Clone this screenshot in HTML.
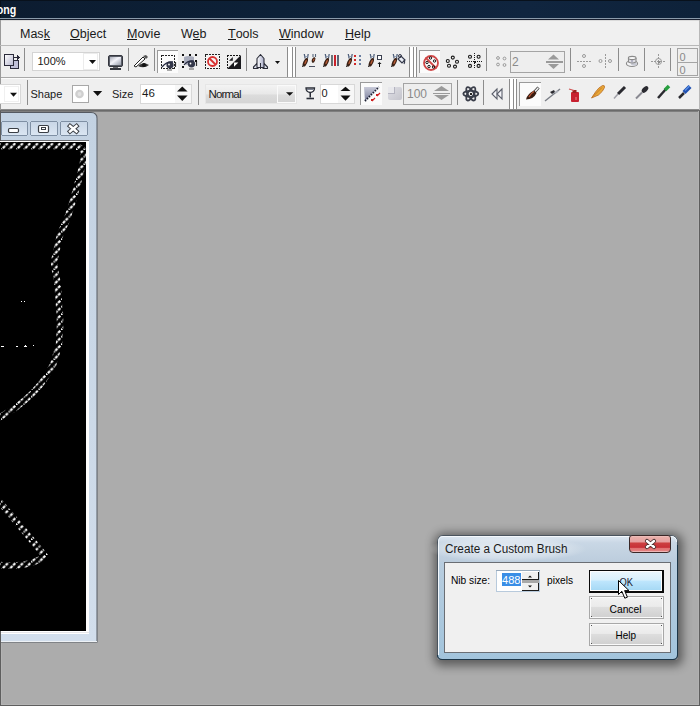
<!DOCTYPE html>
<html><head><meta charset="utf-8">
<style>
*{margin:0;padding:0;box-sizing:border-box}
html,body{width:700px;height:706px;overflow:hidden;background:#acacac;font-family:"Liberation Sans",sans-serif;position:relative}
.a{position:absolute}
#title{left:0;top:0;width:700px;height:18px;background:linear-gradient(90deg,#0c1c30 0%,#0d2138 40%,#10253f 75%,#0e223a 100%)}
#title span{position:absolute;left:-3px;top:2px;color:#fff;font-weight:bold;font-size:12.5px}
#menu{left:0;top:18px;width:700px;height:28px;background:#f0f0f0}
.mi{position:absolute;top:9px;font-size:12.5px;color:#1a1a1a}
.mi u{text-decoration:none;position:relative}.mi u::after{content:"";position:absolute;left:0;right:0;top:12px;height:1px;background:#1a1a1a}
#tb1{left:0;top:46px;width:700px;height:31px;background:#efefef}
#tb2{left:0;top:77px;width:700px;height:33px;background:#efefef}
.sep{position:absolute;width:1px;background:#a8a8a8;border-right:1px solid #fff;width:2px}
.txt{position:absolute;font-size:11px;color:#1a1a1a}
</style></head><body>
<div id="title" class="a"><svg width="700" height="18" style="position:absolute;left:0;top:0"><rect x="0" y="0" width="700" height="1" fill="#08111c"/><rect x="0" y="0" width="1" height="18" fill="#08111c"/><text x="-3.3" y="14" font-family="Liberation Sans" font-weight="bold" font-size="13" fill="#fff" textLength="19.5" lengthAdjust="spacingAndGlyphs">ong</text></svg></div>
<div id="menu" class="a">
  <div class="a" style="left:0;top:0;width:700px;height:1px;background:#8a9aaa"></div>
  <div class="a" style="left:0;top:1px;width:700px;height:1px;background:#1a2030"></div>
  <div class="a" style="left:0;top:2px;width:700px;height:1px;background:#dadada"></div>
  <div class="a" style="left:0;top:2px;width:1px;height:26px;background:#9a9a9a"></div>
  <div class="a" style="left:0;top:27px;width:700px;height:1px;background:#b8b8b8"></div>
  <div class="mi" style="left:20px">Mas<u>k</u></div>
  <div class="mi" style="left:70px"><u>O</u>bject</div>
  <div class="mi" style="left:127px"><u>M</u>ovie</div>
  <div class="mi" style="left:181px">W<u>e</u>b</div>
  <div class="mi" style="left:228px"><u>T</u>ools</div>
  <div class="mi" style="left:279px"><u>W</u>indow</div>
  <div class="mi" style="left:345px"><u>H</u>elp</div>
</div>
<svg class="a" style="left:0;top:0" width="700" height="112" viewBox="0 0 700 112" shape-rendering="crispEdges">
<defs>
<linearGradient id="gdoc" x1="0" y1="0" x2="1" y2="1"><stop offset="0" stop-color="#ffffff"/><stop offset="1" stop-color="#b8b8d0"/></linearGradient>
<linearGradient id="gnorm" x1="0" y1="0" x2="0" y2="1"><stop offset="0" stop-color="#f4f4f4"/><stop offset="0.5" stop-color="#e8e8e8"/><stop offset="0.55" stop-color="#dcdcdc"/><stop offset="1" stop-color="#d4d4d4"/></linearGradient>
<linearGradient id="gmon" x1="0" y1="0" x2="1" y2="1"><stop offset="0" stop-color="#a8acb8"/><stop offset="0.45" stop-color="#f4f4fa"/><stop offset="0.6" stop-color="#d8dae4"/><stop offset="1" stop-color="#9a9eaa"/></linearGradient>
<pattern id="dith" width="2" height="2" patternUnits="userSpaceOnUse"><rect width="2" height="2" fill="#f8f8f8"/><rect width="1" height="1" fill="#ffffff"/><rect x="1" y="1" width="1" height="1" fill="#ffffff"/></pattern>
</defs>
<!-- toolbar1 bg -->
<rect x="0" y="46" width="700" height="31" fill="#efefef"/>
<rect x="0" y="77" width="700" height="1" fill="#a8a8a8"/>
<rect x="0" y="78" width="700" height="1" fill="#fbfbfb"/>
<rect x="0" y="79" width="700" height="30" fill="#efefef"/>
<rect x="0" y="109" width="700" height="1" fill="#8a8a8a"/>
<rect x="0" y="110" width="700" height="1" fill="#6a6a6a"/><rect x="0" y="111" width="700" height="1" fill="#7e7e7e"/>
<rect x="0" y="46" width="1" height="64" fill="#9a9a9a"/>

<!-- separators tb1 -->
<g fill="#8c8c8c">
<rect x="24" y="48" width="1" height="23"/>
<rect x="128" y="48" width="1" height="23"/>
<rect x="154" y="48" width="1" height="23"/>
<rect x="246" y="48" width="1" height="23"/>
<rect x="287" y="47" width="1" height="30"/><rect x="292" y="47" width="1" height="30"/><rect x="295" y="47" width="1" height="30"/>
<rect x="409" y="47" width="1" height="30"/><rect x="413" y="47" width="1" height="30"/><rect x="416" y="47" width="1" height="30"/>
<rect x="486" y="48" width="1" height="23"/>
<rect x="570" y="48" width="1" height="23"/>
<rect x="618" y="48" width="1" height="23"/>
<rect x="644" y="48" width="1" height="23"/>
<rect x="670" y="48" width="1" height="23"/>
</g>
<g fill="#ffffff">
<rect x="288" y="47" width="4" height="30"/><rect x="293" y="47" width="2" height="30"/>
<rect x="410" y="47" width="3" height="30"/><rect x="414" y="47" width="2" height="30"/>
</g>
<!-- icon 1 : doc export -->
<rect x="10.5" y="60.5" width="8" height="8" fill="#c0c0d8" stroke="#2a2a3a"/>
<rect x="4.5" y="54.5" width="9" height="11" fill="url(#gdoc)" stroke="#2a2a3a"/>
<path d="M14 57h5" stroke="#2a2a3a" stroke-width="1"/><path d="M17 55l3 2.5l-3 2.5z" fill="#2a2a3a"/>
<!-- zoom combo -->
<rect x="32.5" y="52.5" width="67" height="18" fill="#ffffff" stroke="#d4d4d4"/>
<rect x="83.5" y="53.5" width="14" height="16" fill="#ffffff" stroke="#ececec"/>
<text x="37.5" y="65" font-family="Liberation Sans" font-size="11" fill="#1a1a1a">100%</text>
<path d="M89 60h7l-3.5 4z" fill="#111" shape-rendering="geometricPrecision"/>
<!-- monitor -->
<rect x="108.5" y="55.5" width="14" height="11" rx="1.5" fill="#5a5e68" stroke="#34363e" stroke-width="1" shape-rendering="geometricPrecision"/>
<rect x="110" y="57" width="11" height="8" fill="url(#gmon)"/>
<rect x="113" y="67" width="5" height="1" fill="#6a6a70"/><rect x="110" y="68" width="11" height="2" fill="#34363e"/>
<!-- pen eye -->
<g shape-rendering="geometricPrecision">
<path d="M134 66l9-9l2 2l-9 8z" fill="#ffffff" stroke="#222" stroke-width="1"/>
<path d="M143 56l3-1l2 2l-2 2z" fill="#555"/>
<path d="M138 66q5-5 11-1q-5 4-11 1z" fill="#333"/>
<circle cx="144" cy="65" r="2" fill="#111"/>
</g>
<!-- pressed btn 1 -->
<rect x="157" y="50" width="21" height="23" fill="#fbfbfb"/>
<rect x="157" y="50" width="21" height="1" fill="#9a9a9a"/><rect x="157" y="50" width="1" height="23" fill="#9a9a9a"/>
<rect x="161" y="55" width="13" height="13" fill="none" stroke="#222" stroke-dasharray="2 1" transform="translate(0.5 0.5)"/>
<g shape-rendering="geometricPrecision">
<ellipse cx="170" cy="65" rx="3.6" ry="3.4" fill="#34384a"/><circle cx="169" cy="64.5" r="0.9" fill="#fff"/>
<path d="M162 67q5-6 11-5" stroke="#262a40" stroke-width="1.3" fill="none"/>
<path d="M175.5 62v5" stroke="#333" stroke-width="1.2"/>
<path d="M167 70h5" stroke="#333" stroke-width="0.8"/>
</g>
<!-- gray eye icon -->
<g shape-rendering="geometricPrecision"><path d="M184 57q5-2 10 0v4q-4 1-6 4q-3 0-4-2z" fill="#a8acbc"/>
<ellipse cx="191.5" cy="64" rx="3.6" ry="3.4" fill="#34384a"/><circle cx="190.5" cy="63.5" r="0.9" fill="#fff"/>
<path d="M184 65q4-5 10-4" stroke="#262a40" stroke-width="1.2" fill="none"/>
<path d="M196.5 61v5" stroke="#333" stroke-width="1.2"/>
<path d="M189 69h5" stroke="#333" stroke-width="0.8"/></g>
<g fill="#111"><rect x="182" y="54" width="2" height="2"/><rect x="188.5" y="54" width="2" height="2"/><rect x="194.5" y="54" width="2" height="2"/><rect x="182" y="60.5" width="2" height="2"/><rect x="182" y="66" width="2" height="2"/><rect x="194.5" y="60" width="2" height="2"/></g>
<!-- no icon -->
<rect x="205.5" y="54.5" width="14" height="14" fill="#f4f4f4" stroke="#222" stroke-dasharray="2 1"/>
<g shape-rendering="geometricPrecision"><circle cx="212.5" cy="61.5" r="4.5" fill="none" stroke="#d83030" stroke-width="1.8"/><path d="M209.5 58.5l6 6" stroke="#d83030" stroke-width="1.8"/></g>
<!-- invert sel -->
<rect x="227.5" y="55.5" width="13" height="13" fill="none" stroke="#111" stroke-width="1.2" stroke-dasharray="1.6 1.2"/>
<g shape-rendering="geometricPrecision"><path d="M227 69L241 55V69Z" fill="#1a1a1e"/><path d="M229 60.8L232.8 57V60.8Z" fill="#1a1a1e"/><path d="M234 62.5H238.3L234 66.8Z" fill="#fff"/></g>
<!-- rocket -->
<defs><linearGradient id="grk" x1="0" y1="0" x2="1" y2="0"><stop offset="0" stop-color="#ffffff"/><stop offset="1" stop-color="#a8acc8"/></linearGradient></defs>
<g shape-rendering="geometricPrecision">
<path d="M257.5 63L253.5 67V68.5H258ZM263.5 63L267.5 67V68.5H263Z" fill="#d8dce8" stroke="#2a2c38" stroke-width="1.1" stroke-linejoin="round"/>
<path d="M260.5 54.5L264 58.5V67.5H257V58.5Z" fill="url(#grk)" stroke="#2a2c38" stroke-width="1.1" stroke-linejoin="round"/>
<path d="M260.5 63V69" stroke="#2a2c38" stroke-width="1"/>
</g>
<path d="M275 61h5l-2.5 3z" fill="#111" shape-rendering="geometricPrecision"/>

<defs>
<g id="brush" shape-rendering="geometricPrecision">
<path d="M2.3 0l0.8 4.5M6.2 0l-0.8 4.5" stroke="#50607a" stroke-width="1.3"/>
<path d="M2.5 2.5h3.5" stroke="#8090a8" stroke-width="0.8"/>
<ellipse cx="3.3" cy="8.3" rx="2" ry="4.6" transform="rotate(24 3.3 8.3)" fill="#3a2014"/>
<ellipse cx="3.6" cy="8" rx="0.8" ry="2.4" transform="rotate(24 3.6 8)" fill="#b85a34"/>
<path d="M0.3 13l1.2-2" stroke="#2a2a2a" stroke-width="1"/>
</g>
</defs>
<use href="#brush" x="302" y="54"/>
<g shape-rendering="geometricPrecision"><path d="M313 54v3M315.5 54v3" stroke="#56667c" stroke-width="1.1"/><ellipse cx="313.5" cy="60" rx="1.6" ry="3" transform="rotate(24 313.5 60)" fill="#3a2014"/><ellipse cx="313.7" cy="59.8" rx="0.6" ry="1.5" transform="rotate(24 313.7 59.8)" fill="#b85a34"/></g>
<rect x="309" y="66" width="6" height="1" fill="#4a5060"/>
<use href="#brush" x="323" y="54"/>
<rect x="331" y="55" width="2" height="11" fill="#6a7478"/><rect x="334" y="55" width="2" height="11" fill="#c8202a"/><rect x="337" y="55" width="2" height="11" fill="#5a6474"/>
<use href="#brush" x="346" y="54"/>
<g fill="#d02828"><rect x="354" y="54.5" width="2" height="2"/><rect x="354" y="58.5" width="2" height="2"/><rect x="354" y="62.5" width="2" height="2"/></g>
<g fill="#6a7ea0"><rect x="358.5" y="54.5" width="2" height="2"/><rect x="358.5" y="58.5" width="2" height="2"/><rect x="358.5" y="62.5" width="2" height="2"/></g>
<use href="#brush" x="368" y="54"/>
<rect x="377.5" y="55.5" width="4" height="4" fill="#fff" stroke="#3a4050"/>
<path d="M379.5 67v-4" stroke="#111" stroke-width="1"/><path d="M377.5 64l2-2l2 2z" fill="#111" shape-rendering="geometricPrecision"/>
<use href="#brush" x="391" y="54"/>
<g shape-rendering="geometricPrecision"><path d="M398 59l3-3l4 4l-3 3z" fill="#e8ecf4" stroke="#34384a" stroke-width="1.2"/><circle cx="400" cy="56" r="1.5" fill="none" stroke="#34384a" stroke-width="1"/><path d="M404 60q1.5 2 0 4" stroke="#34384a" stroke-width="1.2" fill="none"/></g>
<!-- pressed btn 2 -->
<rect x="419" y="50" width="21" height="23" fill="#fbfbfb"/>
<rect x="419" y="50" width="21" height="1" fill="#9a9a9a"/><rect x="419" y="50" width="1" height="23" fill="#9a9a9a"/>
<g shape-rendering="geometricPrecision">
<circle cx="431" cy="63" r="7" fill="none" stroke="#d04848" stroke-width="1.8"/>
<path d="M425.5 57.5l11 11" stroke="#d04848" stroke-width="1.8"/>
<g fill="none" stroke="#1a1a1a" stroke-width="1"><circle cx="430.5" cy="58" r="1.2"/><circle cx="434.5" cy="61" r="1.2"/><circle cx="427" cy="62.5" r="1.2"/><circle cx="429" cy="66.5" r="1.2"/><circle cx="433.5" cy="67" r="1.2"/></g>
<g fill="none" stroke="#1a1a1a" stroke-width="1.1"><circle cx="452.8" cy="57.6" r="1.5"/><circle cx="447.8" cy="61" r="1.5"/><circle cx="457" cy="61.8" r="1.5"/><circle cx="449" cy="65.8" r="1.5"/><circle cx="455" cy="66.6" r="1.5"/></g>
<g fill="none" stroke="#1a1a1a" stroke-width="1.1"><circle cx="470" cy="56.8" r="1.5"/><circle cx="478.6" cy="56.8" r="1.5"/><circle cx="470" cy="65.9" r="1.5"/><circle cx="478.6" cy="65.9" r="1.5"/></g>
</g>
<path d="M474.5 53v16" stroke="#1a1a1a" stroke-dasharray="1 1"/><path d="M467 61.5h15" stroke="#1a1a1a" stroke-dasharray="1 1"/><rect x="473.5" y="60.5" width="2" height="2" fill="#1a1a1a"/>
<!-- gray circles -->
<g fill="none" stroke="#9a9a9a" stroke-width="1" shape-rendering="geometricPrecision"><circle cx="498" cy="58" r="1.4"/><circle cx="504.5" cy="58.5" r="1.4"/><circle cx="498" cy="64.5" r="1.4"/><circle cx="504.5" cy="65" r="1.4"/></g>
<!-- spinner 2 -->
<rect x="510.5" y="51.5" width="54" height="21" fill="#eeeeee" stroke="#a4a4a4"/>
<text x="512" y="65.5" font-family="Liberation Sans" font-size="12" fill="#8a8a8a">2</text>
<g fill="#9a9a9a" shape-rendering="geometricPrecision"><path d="M548 59.5l5.5-5l5.5 5z"/><path d="M548 64l5.5 5l5.5-5z"/></g>
<rect x="546" y="61" width="17" height="2" fill="#9a9a9a"/>
<!-- dashed line icons -->
<g fill="none" stroke="#9a9a9a" stroke-width="1" shape-rendering="geometricPrecision"><circle cx="584" cy="56" r="1.5"/><circle cx="584" cy="66" r="1.5"/><circle cx="600.5" cy="61" r="1.5"/><circle cx="610" cy="61" r="1.5"/></g>
<path d="M577 61h14" stroke="#9a9a9a" stroke-dasharray="2 1"/>
<path d="M605.5 54v14" stroke="#9a9a9a" stroke-dasharray="2 1"/>
<!-- hat -->
<g shape-rendering="geometricPrecision"><ellipse cx="632" cy="63.5" rx="5.6" ry="3" fill="#f4f4f6" stroke="#8a8a8a" stroke-width="1.1"/><ellipse cx="634" cy="64" rx="3" ry="1.6" fill="#c8cad4"/><path d="M628.5 58v4q3.5 2 7.5 0v-4" fill="#e0e0e6" stroke="#8a8a8a" stroke-width="1.1"/><ellipse cx="632.2" cy="58" rx="3.8" ry="1.6" fill="#f8f8f8" stroke="#8a8a8a" stroke-width="1.1"/><path d="M632 60v2.5" stroke="#9a9ab0" stroke-width="1.3"/></g>
<!-- crosshair -->
<g shape-rendering="geometricPrecision"><circle cx="658.5" cy="61.5" r="3" fill="none" stroke="#9a9a9a"/></g>
<path d="M658.5 54v15M651 61.5h15" stroke="#9a9a9a" stroke-dasharray="1.5 1.5"/>
<rect x="657.5" y="60.5" width="2" height="2" fill="#8a8a8a"/>
<!-- boxes -->
<rect x="677.5" y="48.5" width="20" height="14" fill="#eeeeee" stroke="#a4a4a4"/>
<rect x="677.5" y="62.5" width="20" height="13" fill="#eeeeee" stroke="#a4a4a4"/>
<rect x="699" y="20" width="1" height="90" fill="#b8b8b8"/>
<text x="679.5" y="61" font-family="Liberation Sans" font-size="11" fill="#8a8a8a">0</text>
<text x="679.5" y="74" font-family="Liberation Sans" font-size="11" fill="#8a8a8a">0</text>
<!-- ===== toolbar 2 ===== -->
<g fill="#8c8c8c">
<rect x="27" y="80" width="1" height="25"/>
<rect x="198" y="80" width="1" height="25"/>
<rect x="457" y="80" width="1" height="25"/>
<rect x="483" y="80" width="1" height="25"/>
<rect x="509" y="79" width="1" height="30"/><rect x="513" y="79" width="1" height="30"/><rect x="516" y="79" width="1" height="30"/>
</g>
<g fill="#ffffff"><rect x="510" y="79" width="3" height="30"/><rect x="514" y="79" width="2" height="30"/></g>
<rect x="-1.5" y="84.5" width="22" height="19" fill="#ffffff" stroke="#d8d8d8"/>
<rect x="4.5" y="86.5" width="14" height="15" fill="#ffffff" stroke="#f0f0f0"/>
<path d="M10 92.7h7l-3.5 4z" fill="#111" shape-rendering="geometricPrecision"/>
<text x="30.5" y="98" font-family="Liberation Sans" font-size="11" fill="#1a1a1a">Shape</text>
<rect x="72.5" y="85.5" width="16" height="17" fill="#ffffff" stroke="#a8a8a8"/>
<circle cx="79.5" cy="94" r="4.3" fill="#cfcfcf" shape-rendering="geometricPrecision"/>
<circle cx="79.5" cy="94" r="2" fill="#e2e2e2" shape-rendering="geometricPrecision"/>
<path d="M93 91h9.2l-4.6 5z" fill="#111" shape-rendering="geometricPrecision"/>
<text x="112" y="98" font-family="Liberation Sans" font-size="11" fill="#1a1a1a">Size</text>
<rect x="140.5" y="84.5" width="51" height="19" fill="#ffffff" stroke="#d8d8d8"/>
<rect x="175" y="85" width="16" height="18" fill="#f7f7f7"/>
<text x="142" y="97" font-family="Liberation Sans" font-size="11.5" fill="#1a1a1a">46</text>
<g fill="#111" shape-rendering="geometricPrecision"><path d="M177 91.6l5.3-5.2l5.3 5.2z"/><path d="M177 95.6l5.3 5.4l5.3-5.4z"/></g>
<rect x="205.5" y="84.5" width="91" height="19" fill="url(#gnorm)" stroke="#e6e6e6"/>
<rect x="277.5" y="85.5" width="18" height="17" fill="url(#gnorm)" stroke="#fafafa"/>
<text x="208.5" y="97.6" font-family="Liberation Sans" font-size="11.5" fill="#1a1a1a" textLength="33">Normal</text>
<path d="M286 92.2h7.3l-3.65 3.6z" fill="#111" shape-rendering="geometricPrecision"/>
<!-- goblet -->
<g shape-rendering="geometricPrecision">
<path d="M306 88h8.5q0 4-4.25 4.5q-4.25-0.5-4.25-4.5z" fill="#ffffff" stroke="#2a2e38" stroke-width="1.3"/>
<path d="M307 89.5h6.5" stroke="#7a8090" stroke-width="1"/>
<path d="M310.25 92.5v5" stroke="#2a2e38" stroke-width="1.5"/>
<path d="M306.5 98.5h7.5" stroke="#2a2e38" stroke-width="1.6"/>
</g>
<rect x="320.5" y="84.5" width="34" height="19" fill="#ffffff" stroke="#d8d8d8"/>
<rect x="338" y="85" width="16" height="18" fill="#f7f7f7"/>
<text x="321.5" y="96.5" font-family="Liberation Sans" font-size="11" fill="#1a1a1a">0</text>
<g fill="#111" shape-rendering="geometricPrecision"><path d="M340.5 91.1l5-4.4l5 4.4z"/><path d="M340.5 95.6l5 5.2l5-5.2z"/></g>
<!-- pressed btn 3 -->
<rect x="360" y="82" width="22" height="23" fill="#fbfbfb"/>
<rect x="360" y="82" width="22" height="1" fill="#9a9a9a"/><rect x="360" y="82" width="1" height="23" fill="#9a9a9a"/>
<defs><linearGradient id="gtri" x1="0" y1="0" x2="0" y2="1"><stop offset="0" stop-color="#c8cad8"/><stop offset="1" stop-color="#7a7e9c"/></linearGradient>
<linearGradient id="gsq" x1="0" y1="0" x2="1" y2="1"><stop offset="0" stop-color="#e0e0e6"/><stop offset="1" stop-color="#c4c4cc"/></linearGradient></defs>
<path d="M364 87h15l-14 14z" fill="url(#gtri)" shape-rendering="geometricPrecision"/>
<path d="M365 101l14-14" stroke="#1a1e30" stroke-width="2" stroke-dasharray="1.4 1.4" shape-rendering="geometricPrecision"/>
<g stroke="#d02020" stroke-width="1.2" shape-rendering="geometricPrecision"><path d="M372 101l3-3M377 96l3-3"/></g>
<g fill="#d02020"><rect x="371" y="99" width="2" height="2"/><rect x="376" y="94" width="2" height="2"/></g>
<!-- gray square icon -->
<rect x="388" y="87" width="14" height="13" rx="2" fill="url(#gsq)" shape-rendering="geometricPrecision"/>
<path d="M388 87h6v6h-6z" fill="#e8e8ec"/>
<path d="M394.5 87v6.5h-6.5" stroke="#b4b4c0" fill="none" stroke-width="1"/>
<!-- disabled spinner -->
<rect x="403.5" y="83.5" width="48" height="21" fill="#eeeeee" stroke="#a4a4a4"/>
<text x="407" y="97.5" font-family="Liberation Sans" font-size="12" fill="#8a8a8a">100</text>
<g fill="#9a9a9a" shape-rendering="geometricPrecision"><path d="M434 91l7.5-5l7.5 5z"/><path d="M434 95l7.5 5l7.5-5z"/></g>
<rect x="433" y="92.5" width="17" height="1.5" fill="#9a9a9a"/>
<!-- atom -->
<g fill="none" stroke="#3a3e4a" stroke-width="1.8" shape-rendering="geometricPrecision">
<ellipse cx="470.8" cy="93.8" rx="7.5" ry="3" />
<ellipse cx="470.8" cy="93.8" rx="7.5" ry="3" transform="rotate(60 470.8 93.8)"/>
<ellipse cx="470.8" cy="93.8" rx="7.5" ry="3" transform="rotate(-60 470.8 93.8)"/>
</g>
<circle cx="470.8" cy="93.8" r="1.3" fill="#222"/>
<!-- rewind -->
<g fill="#f4f4f8" stroke="#5a5e6a" stroke-width="1.1" shape-rendering="geometricPrecision">
<path d="M497 89l-5 5l5 5z"/><path d="M502 89l-5 5l5 5z"/>
</g>
<!-- pressed btn 4 -->
<rect x="519" y="82" width="22" height="24" fill="#fbfbfb"/>
<rect x="519" y="82" width="22" height="1" fill="#9a9a9a"/><rect x="519" y="82" width="1" height="24" fill="#9a9a9a"/>
<g shape-rendering="geometricPrecision">
<path d="M534.5 92l4-4.5" stroke="#3a3a3a" stroke-width="3"/><path d="M535 91.5l3.3-3.8" stroke="#f4f4f4" stroke-width="1.4"/>
<path d="M526 99.5q1.5-6 8-9l2.5 2.5q-3 6.5-10.5 6.5z" fill="#3a1c10"/>
<path d="M529 97q2-4 5-5.5" stroke="#c05a38" stroke-width="1.3" fill="none"/>
<!-- airbrush -->
<path d="M545 101l15-12" stroke="#7a7e86" stroke-width="1.5"/>
<path d="M550 92l4-2l1 2l-3 2z" fill="#2a2a30"/>
<path d="M555 93l3-2" stroke="#b0b4bc" stroke-width="2"/>
<!-- extinguisher -->
<rect x="571" y="92" width="8" height="10" rx="1" fill="#c82030"/>
<rect x="572.5" y="90" width="4" height="3" fill="#9a2020"/>
<path d="M569 89l5 1.5" stroke="#d05050" stroke-width="1.2"/>
<path d="M576 97v3" stroke="#f0a0a0" stroke-width="0.8"/>
<!-- calligraphy -->
<path d="M591.5 98l4-6q3-4.5 7-6.5q2.5-0.5 2 2q-1.5 4-6 7.5z" fill="#e8a838" stroke="#b86a20" stroke-width="0.8"/>
<path d="M593 96.5l9-9" stroke="#c07020" stroke-width="0.8"/>
<!-- pencil -->
<path d="M618 94l7-7" stroke="#2a2a30" stroke-width="3"/>
<path d="M614 98.5l4-4.5" stroke="#a0a0a8" stroke-width="1.5"/>
<!-- pen -->
<ellipse cx="645" cy="89.5" rx="2.3" ry="4" transform="rotate(45 645 89.5)" fill="#2a2a30"/>
<path d="M636 98.5l6-6" stroke="#8a8a92" stroke-width="2"/>
<!-- green marker -->
<path d="M658 98l8-9" stroke="#2a2a30" stroke-width="2.5"/>
<path d="M665 90l4-4" stroke="#28a040" stroke-width="3.5"/>
<!-- blue marker -->
<path d="M684 92.5l6-6" stroke="#2050b0" stroke-width="4.2"/><path d="M685 90.5l4.5-4.5" stroke="#5a90e8" stroke-width="1.3"/>
<path d="M679 98l5-5" stroke="#2a2a30" stroke-width="2.5"/>
</g>
</svg>
<!-- ===== document window ===== -->
<svg class="a" style="left:0;top:111px" width="110" height="540" viewBox="0 111 110 540" shape-rendering="crispEdges">
<defs>
<linearGradient id="gfr" x1="0" y1="0" x2="0" y2="1"><stop offset="0" stop-color="#c3d2e2"/><stop offset="1" stop-color="#d2deec"/></linearGradient>
<linearGradient id="gbtn" x1="0" y1="0" x2="0" y2="1"><stop offset="0" stop-color="#c8d6e6"/><stop offset="1" stop-color="#dbe6f2"/></linearGradient>
<pattern id="ants" width="7.5" height="7.5" patternUnits="userSpaceOnUse" patternTransform="translate(1 0)">
<path d="M-1 8.5L8.5 -1" stroke="#fff" stroke-width="2.2" stroke-dasharray="3 1" shape-rendering="geometricPrecision"/>
</pattern>
<mask id="antmask"><path d="M-5 146 L72 146 L78 147 L82 149 L84 152 L83 163 L80 175 L77 186 L74 197 L70 210 L66 222 L61 232 L58 243 L56 253 L54 262 L55 270 L57 280 L58 290 L59 305 L60 315 L60 330 L59 345 L56 355 L53 365 L47 375 L40 385 L33 393 L25 400 L15 408 L5 414 L-5 420" fill="none" stroke="#fff" stroke-width="6.5" shape-rendering="geometricPrecision"/>
<path d="M-2 500 Q22 528 45 556 Q30 568 0 565" fill="none" stroke="#fff" stroke-width="6.5" shape-rendering="geometricPrecision"/></mask>
</defs>
<path d="M0 112 H91 Q97.5 112 97.5 118.5 V642.5 H0 Z" fill="#555a62" shape-rendering="geometricPrecision"/>
<path d="M1 113 H91 Q96.5 113 96.5 118.5 V641.5 H1 Z" fill="url(#gfr)" shape-rendering="geometricPrecision"/>
<rect x="0" y="112" width="1" height="530" fill="#50545a"/>
<!-- buttons -->
<rect x="1.5" y="121.5" width="26" height="14" rx="2" fill="url(#gbtn)" stroke="#7f90a4"/>
<rect x="30.5" y="121.5" width="27" height="14" rx="2" fill="url(#gbtn)" stroke="#7f90a4"/>
<rect x="60.5" y="121.5" width="27" height="14" rx="2" fill="url(#gbtn)" stroke="#7f90a4"/>
<rect x="8.5" y="128.5" width="10" height="4" rx="1.2" fill="#fff" stroke="#3a3e44" stroke-width="1.2" shape-rendering="geometricPrecision"/>
<rect x="38.5" y="125.5" width="10" height="7" rx="1.2" fill="#fff" stroke="#3a3e44" stroke-width="1.2" shape-rendering="geometricPrecision"/>
<rect x="41.5" y="127.5" width="4" height="2" fill="none" stroke="#3a3e44" stroke-width="1"/>
<path d="M70 126 L76.5 131.5 M76.5 126 L70 131.5" stroke="#3a3e44" stroke-width="4.4" stroke-linecap="square" shape-rendering="geometricPrecision"/>
<path d="M70 126 L76.5 131.5 M76.5 126 L70 131.5" stroke="#fff" stroke-width="2.4" stroke-linecap="square" shape-rendering="geometricPrecision"/>
<!-- canvas border -->
<rect x="0" y="140" width="89" height="1" fill="#6c6e72"/>
<rect x="0" y="141" width="89" height="493" fill="#ffffff"/>
<rect x="86" y="141" width="3" height="493" fill="#fdfdfd"/>
<rect x="0" y="632" width="89" height="1" fill="#e6e6ea"/>
<rect x="1" y="641" width="96" height="1" fill="#eef2f6"/>
<rect x="0" y="142" width="86" height="489" fill="#000"/>
<rect x="0" y="140" width="89" height="494" fill="url(#ants)" mask="url(#antmask)"/>
<g fill="#fff"><rect x="21" y="301" width="1" height="1"/><rect x="24" y="301" width="1" height="1"/><rect x="1" y="346" width="3" height="1"/><rect x="16" y="346" width="2" height="1"/><rect x="24" y="346" width="3" height="1"/><rect x="25" y="345" width="1" height="1"/><rect x="33" y="345" width="1" height="1"/></g>
</svg>
<!-- ===== dialog ===== -->
<div class="a" style="left:437px;top:535px;width:241px;height:125px;border-radius:6px 6px 4px 4px;box-shadow:1px 2px 10px 4px rgba(0,0,0,0.45)"></div>
<svg class="a" style="left:430px;top:528px" width="256" height="140" viewBox="430 528 256 140" shape-rendering="crispEdges">
<defs>
<linearGradient id="gdt" x1="0" y1="0" x2="0" y2="1"><stop offset="0" stop-color="#dce6f0"/><stop offset="0.25" stop-color="#c9d7e5"/><stop offset="1" stop-color="#bccddd"/></linearGradient>
<linearGradient id="gdb" x1="0" y1="0" x2="0" y2="1"><stop offset="0" stop-color="#bfd0e0"/><stop offset="1" stop-color="#a2c4dc"/></linearGradient>
<linearGradient id="gcl" x1="0" y1="0" x2="0" y2="1"><stop offset="0" stop-color="#f8e0e0"/><stop offset="0.08" stop-color="#eab0aa"/><stop offset="0.38" stop-color="#e6a0a0"/><stop offset="0.44" stop-color="#cc4040"/><stop offset="0.7" stop-color="#c83038"/><stop offset="0.74" stop-color="#e07070"/><stop offset="0.9" stop-color="#e48080"/><stop offset="0.95" stop-color="#f0c0c0"/></linearGradient>
<linearGradient id="gok" x1="0" y1="0" x2="0" y2="1"><stop offset="0" stop-color="#eaf6fd"/><stop offset="0.45" stop-color="#d9f0fc"/><stop offset="0.5" stop-color="#bee6fd"/><stop offset="1" stop-color="#a7d9f5"/></linearGradient>
<linearGradient id="gbt" x1="0" y1="0" x2="0" y2="1"><stop offset="0" stop-color="#f2f2f2"/><stop offset="0.45" stop-color="#ebebeb"/><stop offset="0.5" stop-color="#dddddd"/><stop offset="1" stop-color="#cfcfcf"/></linearGradient>
</defs>
<path d="M443 535.5 H671 Q677.5 535.5 677.5 542 V655 Q677.5 659.5 673 659.5 H442 Q437.5 659.5 437.5 655 V542 Q437.5 535.5 443 535.5 Z" fill="url(#gdb)" stroke="#4a545e" shape-rendering="geometricPrecision"/>
<path d="M443 536.5 H671 Q676.5 536.5 676.5 542 V562 H438.5 V542 Q438.5 536.5 443 536.5 Z" fill="url(#gdt)" shape-rendering="geometricPrecision"/>
<path d="M438.5 655 V542 Q438.5 536.5 443 536.5 H671 Q676.5 536.5 676.5 542" fill="none" stroke="#f4f8fc" stroke-width="1" shape-rendering="geometricPrecision"/>
<path d="M437.5 655 Q437.5 659.5 442 659.5 H673 Q677.5 659.5 677.5 655 V545" fill="none" stroke="#1c3648" stroke-width="1" shape-rendering="geometricPrecision"/>
<defs><radialGradient id="glow" cx="0.5" cy="0.5" r="0.5"><stop offset="0" stop-color="#fff" stop-opacity="0.55"/><stop offset="0.7" stop-color="#fff" stop-opacity="0.3"/><stop offset="1" stop-color="#fff" stop-opacity="0"/></radialGradient></defs>
<ellipse cx="507" cy="549" rx="80" ry="13" fill="url(#glow)" shape-rendering="geometricPrecision"/>
<text x="445" y="553" font-family="Liberation Sans" font-size="12" fill="#1a1a1a" textLength="122.5" lengthAdjust="spacingAndGlyphs">Create a Custom Brush</text>
<!-- close -->
<path d="M632 535.5 H668 Q670.5 535.5 670.5 538 V549 Q670.5 552.5 667 552.5 H633 Q629.5 552.5 629.5 549 V538 Q629.5 535.5 632 535.5Z" fill="url(#gcl)" stroke="#3a2828" shape-rendering="geometricPrecision"/>
<path d="M647 541 L654 547 M654 541 L647 547" stroke="#4a3030" stroke-width="4.2" stroke-linecap="round" shape-rendering="geometricPrecision"/>
<path d="M647 541 L654 547 M654 541 L647 547" stroke="#fff" stroke-width="2.4" stroke-linecap="round" shape-rendering="geometricPrecision"/>
<!-- client -->
<rect x="444" y="562" width="227" height="91" fill="#6a6e74"/>
<rect x="445" y="563" width="225" height="89" fill="#f0f0f0"/>
<text x="451" y="584" font-family="Liberation Sans" font-size="11" fill="#000" textLength="39" lengthAdjust="spacingAndGlyphs">Nib size:</text>
<rect x="496.5" y="570.5" width="43" height="21" fill="#fff" stroke="#b8cadc"/>
<rect x="496" y="570" width="44" height="1" fill="#98aabc"/>
<rect x="502" y="573" width="19" height="13" fill="#3a8ee6"/>
<text x="502" y="584" font-family="Liberation Sans" font-size="11" fill="#fff" textLength="18.5" lengthAdjust="spacingAndGlyphs">488</text>
<rect x="522" y="572" width="17" height="8" fill="#f0f0f0"/>
<rect x="522" y="583" width="17" height="8" fill="#f0f0f0"/>
<rect x="522" y="580" width="17" height="3" fill="#a8a8a8"/>
<rect x="538" y="572" width="1" height="8" fill="#1a1a1a"/><rect x="522" y="579" width="17" height="1" fill="#1a1a1a"/>
<rect x="538" y="583" width="1" height="8" fill="#1a1a1a"/><rect x="522" y="590" width="17" height="1" fill="#1a1a1a"/>
<path d="M528 577.5h4l-2-2z" fill="#111" shape-rendering="geometricPrecision"/>
<path d="M528 585.5h4l-2 2z" fill="#111" shape-rendering="geometricPrecision"/>
<text x="547" y="584" font-family="Liberation Sans" font-size="11" fill="#000" textLength="26" lengthAdjust="spacingAndGlyphs">pixels</text>
<!-- OK -->
<rect x="589" y="570" width="75" height="23" fill="#0a0a0a"/>
<rect x="590" y="571" width="72" height="20" fill="#fdfdfd"/>
<rect x="591" y="572" width="70" height="18" fill="url(#gok)"/>
<text x="619.5" y="586" font-family="Liberation Sans" font-size="11.5" fill="#1a2030" textLength="13.5" lengthAdjust="spacingAndGlyphs">OK</text>
<!-- Cancel -->
<rect x="589.5" y="596.5" width="74" height="22" fill="url(#gbt)" stroke="#a8a8a8"/>
<rect x="590.5" y="597.5" width="72" height="20" fill="none" stroke="#fafafa"/>
<g fill="#505050"><rect x="591" y="598" width="1" height="1"/><rect x="661" y="598" width="1" height="1"/><rect x="591" y="616" width="1" height="1"/><rect x="661" y="616" width="1" height="1"/></g>
<text x="609.5" y="612.5" font-family="Liberation Sans" font-size="11" fill="#000" textLength="32" lengthAdjust="spacingAndGlyphs">Cancel</text>
<!-- Help -->
<rect x="589.5" y="623.5" width="74" height="22" fill="url(#gbt)" stroke="#a8a8a8"/>
<rect x="590.5" y="624.5" width="72" height="20" fill="none" stroke="#fafafa"/>
<g fill="#505050"><rect x="591" y="625" width="1" height="1"/><rect x="661" y="625" width="1" height="1"/><rect x="591" y="643" width="1" height="1"/><rect x="661" y="643" width="1" height="1"/></g>
<text x="615.5" y="638.8" font-family="Liberation Sans" font-size="11" fill="#000" textLength="20.5" lengthAdjust="spacingAndGlyphs">Help</text>
<!-- cursor -->
<path d="M618.5 580.5 V594.5 L621.8 591.2 L624.8 598.2 L627.4 597.2 L624.6 590.6 H629 Z" fill="#fff" stroke="#000" stroke-width="1" shape-rendering="geometricPrecision"/>
</svg>
<div class="a" style="left:0;top:111px;width:1px;height:30px;background:#5e5e5e"></div><div class="a" style="left:0;top:631px;width:1px;height:75px;background:#5e5e5e"></div>
<div class="a" style="left:699px;top:111px;width:1px;height:595px;background:#5e5e5e"></div>
<div class="a" style="left:0;top:705px;width:700px;height:1px;background:#5e5e5e"></div>
<div class="a" style="left:1px;top:643px;width:1px;height:62px;background:#b4b4b4"></div>
<div class="a" style="left:698px;top:111px;width:1px;height:594px;background:#b2b2b2"></div>
<div class="a" style="left:1px;top:704px;width:698px;height:1px;background:#b4b4b4"></div>
</body></html>
